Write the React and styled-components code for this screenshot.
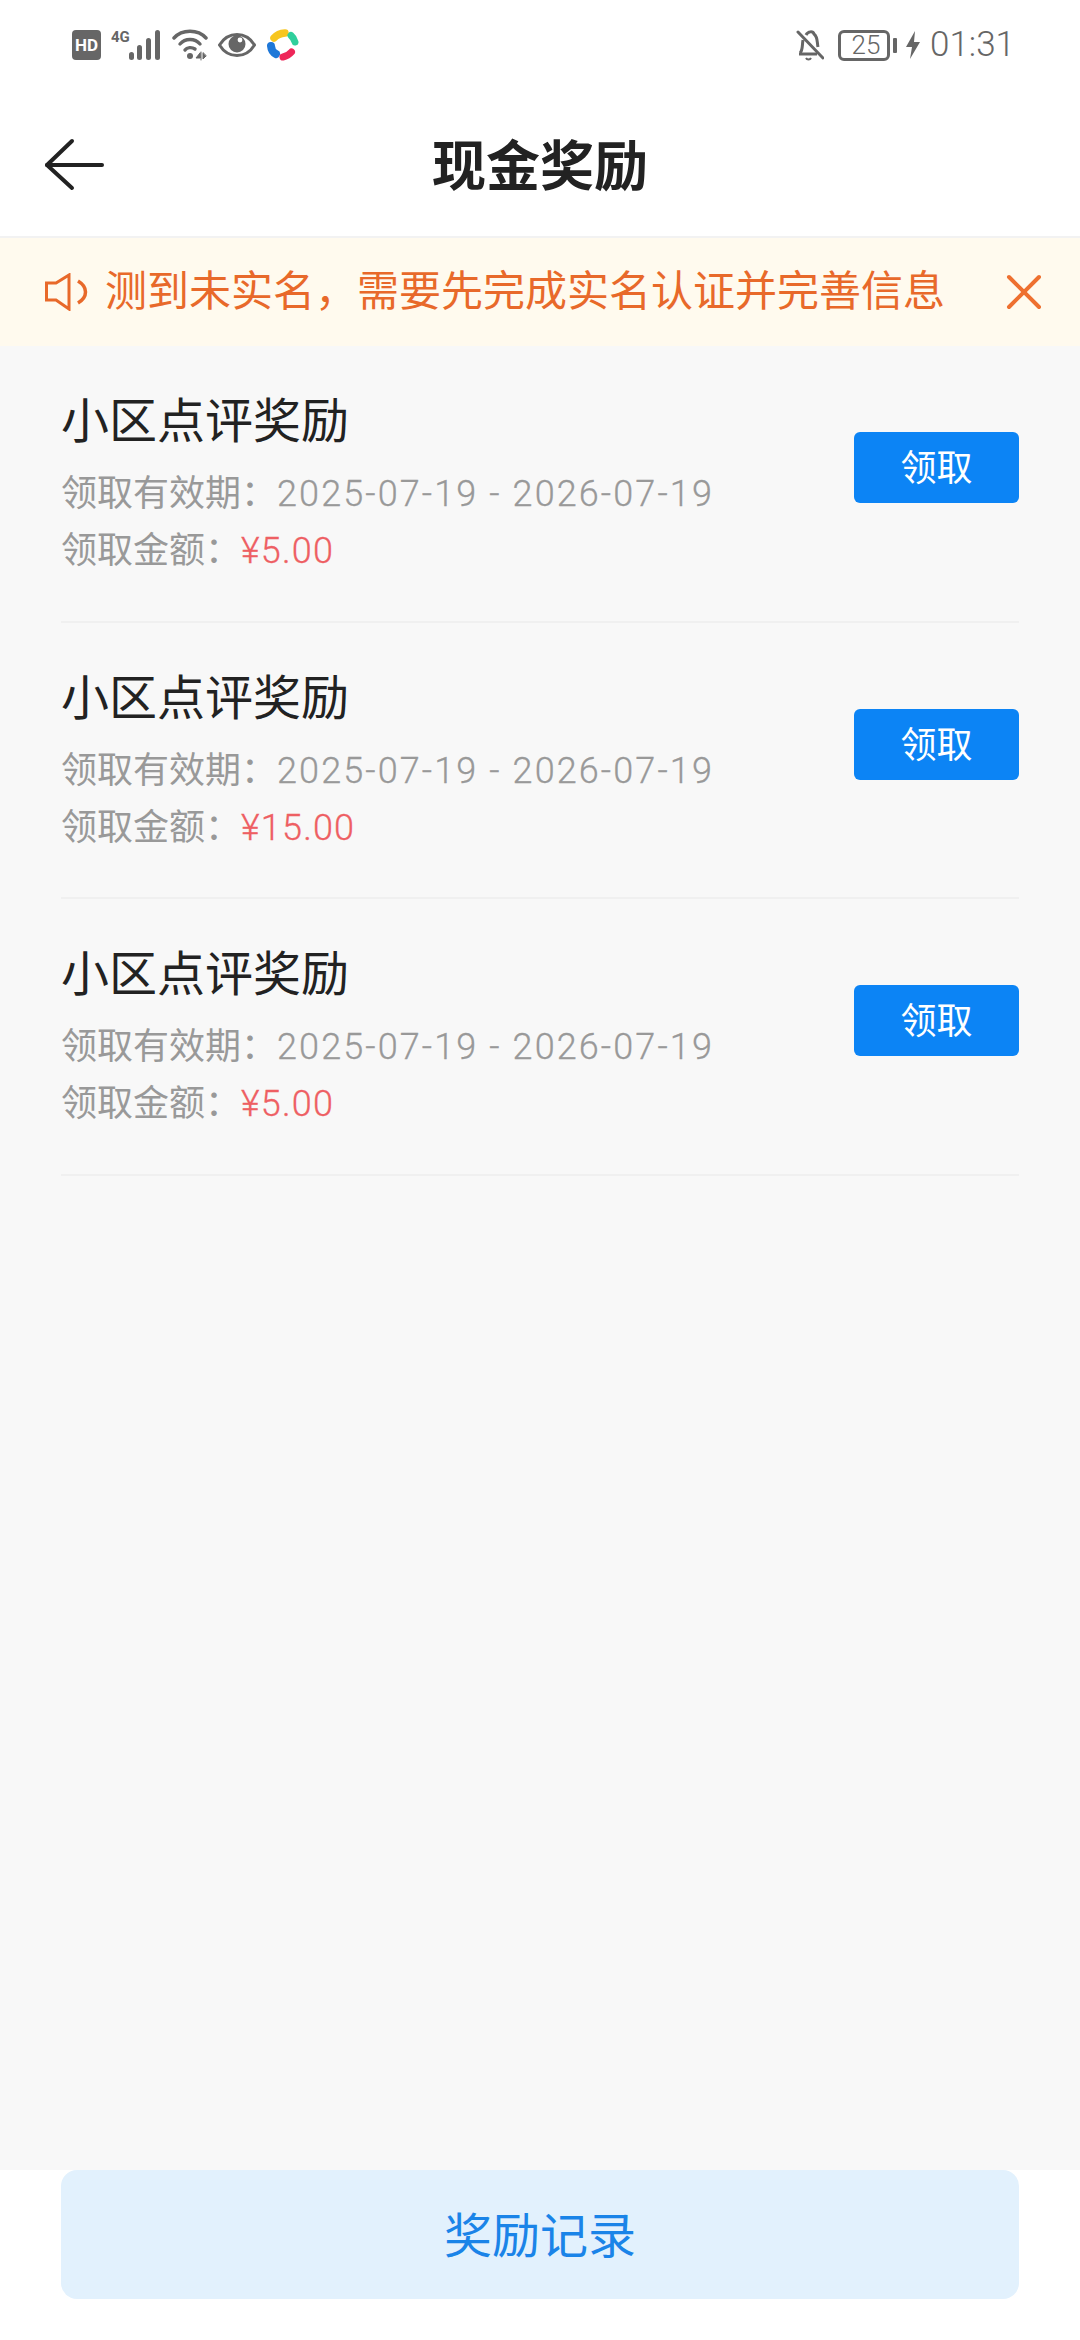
import React from "react";
import styled, { createGlobalStyle } from "styled-components";

const Global = createGlobalStyle`
  html, body { margin: 0; padding: 0; background: #f8f8f8; }
  * { box-sizing: border-box; }
`;
const FONT = `"Noto Sans CJK SC", "Noto Sans", Roboto, sans-serif`;

const Page = styled.div`
  width: 1080px; height: 2340px; display: flex; flex-direction: column;
  background: #f8f8f8; font-family: ${FONT}; overflow: hidden;
`;
const StatusBar = styled.div`
  height: 90px; background: #fff; padding: 0 65px 0 72px; display: flex;
  justify-content: space-between; align-items: center; color: #666;
`;
const StatusGroup = styled.div`display: flex; align-items: center; gap: ${p => p.$gap}px;`;
const Clock = styled.span`
  font: 300 35px/40px Roboto, sans-serif; color: #666; margin-left: 7px; white-space: nowrap;
`;
const Battery = styled.div`
  width: 52px; height: 31px; border: 3px solid #666; border-radius: 6px; margin-left: 11px;
  display: flex; align-items: center; justify-content: center;
  font: 300 26px Roboto, sans-serif; color: #666; padding-left: 4px;
`;
const BatteryCap = styled.div`width: 4px; height: 15px; background: #666; border-radius: 1px;`;
const NavBar = styled.div`
  height: 148px; background: #fff; display: flex; align-items: center; justify-content: center;
  position: relative; border-bottom: 2px solid #f2f2f2;
`;
const BackBtn = styled.div`position: absolute; left: 44px; top: 46px; display: flex;`;
const Title = styled.h1`margin: 0 0 2px; font: 700 54px ${FONT}; color: #222;`;
const Notice = styled.div`
  height: 108px; background: #fffaee; display: flex; align-items: center;
  padding: 0 38px 0 45px; color: #e8692a; font-size: 42px;
`;
const NoticeText = styled.span`flex: 1; margin: 0 0 10px 13px; white-space: nowrap;`;
const List = styled.div`flex: 1; padding: 0 61px;`;
const Row = styled.div`
  height: 276.7px; display: flex; justify-content: space-between; align-items: flex-start;
  border-bottom: 2px solid #f0f0f0;
`;
const Info = styled.div`display: flex; flex-direction: column; padding-top: 39px;`;
const RowTitle = styled.div`font-size: 48px; line-height: 64px; color: #222; font-weight: 400; margin-bottom: 13px;`;
const Meta = styled.div`font-size: 36px; line-height: 57px; color: #999; font-weight: 400; white-space: nowrap;`;
const Digits = styled.span`
  font: 300 36px/36px Roboto, sans-serif; letter-spacing: ${p => p.$spacing}px;
  color: ${p => p.$color}; -webkit-text-stroke: 0.3px ${p => p.$color};
`;
const Claim = styled.button`
  width: 165px; height: 71px; border: 0; border-radius: 6px; background: #0c84f5; color: #fff;
  font: 400 36px ${FONT}; padding: 0 0 5px; margin-top: 86px;
`;
const Footer = styled.div`height: 170px; background: #fff; padding: 0 61px;`;
const RecordBtn = styled.button`
  width: 100%; height: 129px; border: 0; border-radius: 16px; background: #e2f1fd;
  color: #1a84e8; font: 400 48px ${FONT}; padding: 0 0 6px;
`;

const Speaker = () => (
  <svg width="47" height="38" viewBox="0 0 47 38" fill="none" stroke="#e8692a" strokeWidth="3">
    <path d="M1.5 10H11L24 2V36L11 27H1.5Z" />
    <path d="M33 8C43 14 43 24 33 30" strokeWidth="3.5" />
  </svg>
);
const Rows = ["¥5.00", "¥15.00", "¥5.00"];

export default function App() {
  return (
    <Page>
      <Global />
      <StatusBar>
        <StatusGroup $gap={10}>
          <svg width="29" height="30" viewBox="0 0 29 30"><rect width="29" height="30" rx="4" fill="#666" /><text x="14.5" y="21" fontSize="17" fontWeight="700" fontFamily="Roboto" fill="#fff" textAnchor="middle">HD</text></svg>
          <svg width="51" height="32" viewBox="0 0 51 32" fill="#666">
            <text x="0" y="13" fontSize="15" fontWeight="700" fontFamily="Roboto">4G</text>
            <rect x="18" y="23" width="5" height="8" rx="2.5" /><rect x="26" y="16" width="5" height="15" rx="2.5" /><rect x="35" y="9" width="5" height="22" rx="2.5" /><rect x="44" y="1" width="5" height="30" rx="2.5" />
          </svg>
          <svg width="36" height="32" viewBox="0 0 36 32" fill="none" stroke="#666" strokeWidth="3.4" strokeLinecap="round">
            <path d="M2 9C10 0 26 0 34 9" /><path d="M8 15C13 9 23 9 28 15" /><path d="M13 21C15 18 20 18 23 20" />
            <circle cx="18" cy="27" r="3" fill="#666" stroke="none" /><path d="M28 24l-4 5h4zM29 23v8M31 24v6l3-3z" fill="#666" strokeWidth="1" />
          </svg>
          <svg width="38" height="26" viewBox="0 0 38 26">
            <path d="M1.5 13C10 -1 28 -1 36.5 13C28 27 10 27 1.5 13Z" fill="none" stroke="#666" strokeWidth="3" /><circle cx="19" cy="12" r="8.5" fill="#666" /><circle cx="22" cy="8" r="2.4" fill="#fff" />
          </svg>
          <svg width="32" height="32" viewBox="0 0 32 32" fill="none" strokeLinecap="round" style={{ marginLeft: 1 }}>
            <path d="M7 9Q11 4.5 18 4" stroke="#f7c61f" strokeWidth="7.5" />
            <path d="M24 6.5Q27 9 28 13" stroke="#2fcf9c" strokeWidth="7" />
            <path d="M4 17Q4.5 23 9 25" stroke="#1f78d8" strokeWidth="8" />
            <path d="M16 28Q21 27 24.5 23" stroke="#ee2659" strokeWidth="7" />
          </svg>
        </StatusGroup>
        <StatusGroup $gap={3}>
          <svg width="28" height="32" viewBox="0 0 28 32" fill="none" stroke="#666" strokeWidth="3">
            <path d="M2 3L27 29" strokeLinecap="round" /><path d="M4 24C7 21 6 16 7 11M10 6C12 2 17 2 18 5C22 8 21 14 22 18" /><path d="M3 25H21" /><path d="M10 29C11 31 14 31 15 29" strokeWidth="2" />
          </svg>
          <Battery>25</Battery>
          <BatteryCap />
          <svg width="14" height="28" viewBox="0 0 14 28" fill="#666" style={{ marginLeft: 6 }}><path d="M9 0L0 16H6L4 28L14 11H8Z" /></svg>
          <Clock>01:31</Clock>
        </StatusGroup>
      </StatusBar>
      <NavBar>
        <BackBtn>
          <svg width="62" height="56" viewBox="0 0 62 56" fill="none" stroke="#222" strokeWidth="4" strokeLinecap="round" strokeLinejoin="round">
            <path d="M28 5L3 29L28 52" /><path d="M3 29H58" />
          </svg>
        </BackBtn>
        <Title>现金奖励</Title>
      </NavBar>
      <Notice>
        <Speaker />
        <NoticeText>测到未实名，需要先完成实名认证并完善信息</NoticeText>
        <svg width="36" height="36" viewBox="0 0 36 36" stroke="#ee7030" strokeWidth="4" strokeLinecap="round"><path d="M3 3L33 33M33 3L3 33" /></svg>
      </Notice>
      <List>
        {Rows.map((amount, i) => (
          <Row key={i}>
            <Info>
              <RowTitle>小区点评奖励</RowTitle>
              <Meta>领取有效期：<Digits $spacing={2.1} $color="#999">2025-07-19 - 2026-07-19</Digits></Meta>
              <Meta>领取金额：<Digits $spacing={1.2} $color="#ee5f63">{amount}</Digits></Meta>
            </Info>
            <Claim>领取</Claim>
          </Row>
        ))}
      </List>
      <Footer><RecordBtn>奖励记录</RecordBtn></Footer>
    </Page>
  );
}
